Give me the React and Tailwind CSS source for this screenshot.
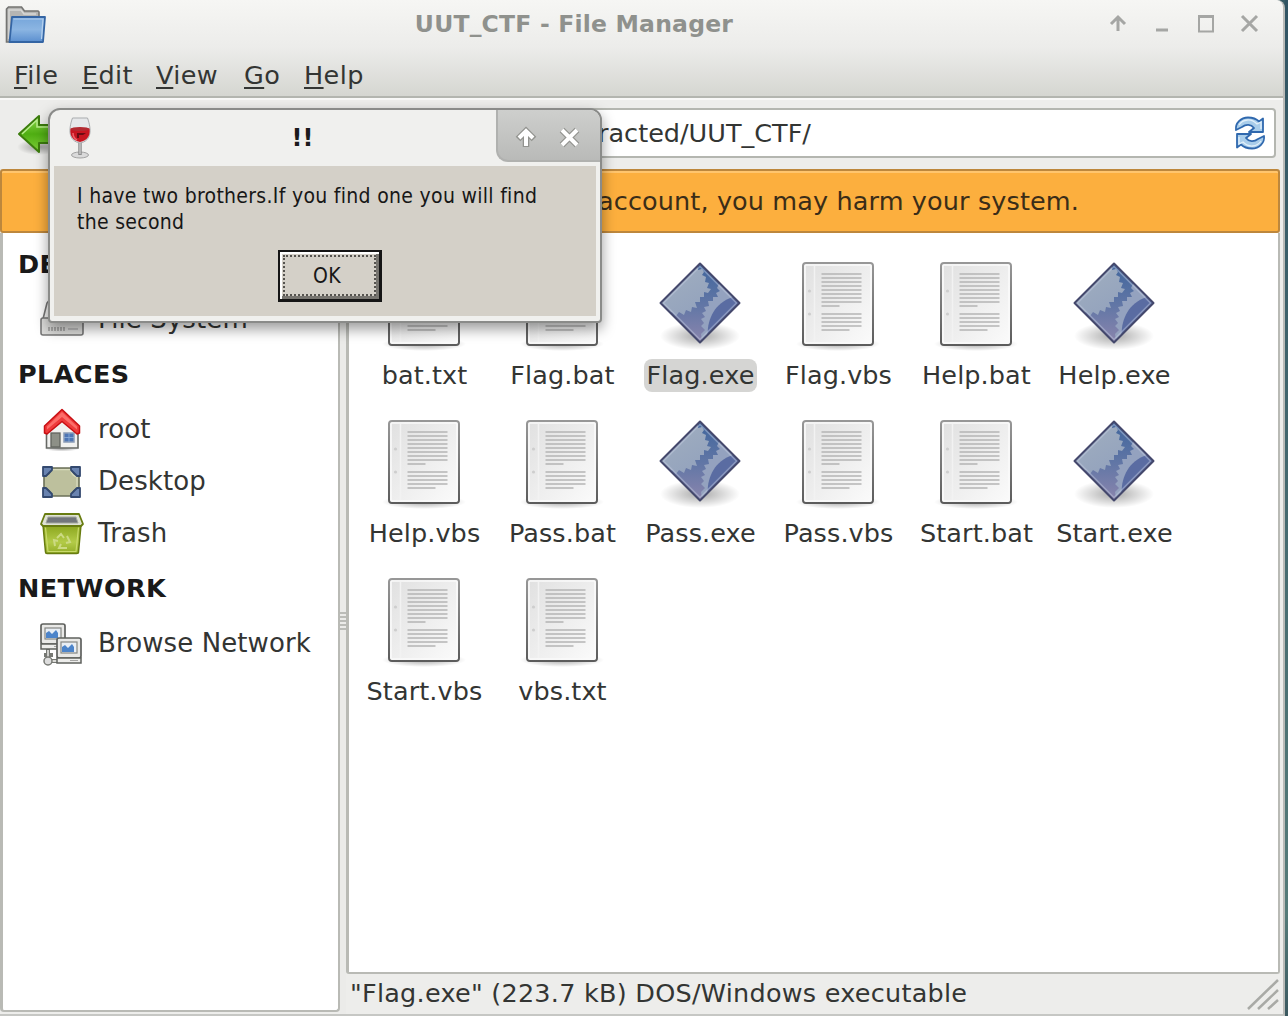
import React from "react";

const FILES = [
  ["bat.txt", "doc"], ["Flag.bat", "doc"], ["Flag.exe", "exe"], ["Flag.vbs", "doc"], ["Help.bat", "doc"], ["Help.exe", "exe"],
  ["Help.vbs", "doc"], ["Pass.bat", "doc"], ["Pass.exe", "exe"], ["Pass.vbs", "doc"], ["Start.bat", "doc"], ["Start.exe", "exe"],
  ["Start.vbs", "doc"], ["vbs.txt", "doc"],
];

function Defs() {
  return (
    <svg className="absolute h-0 w-0" aria-hidden="true">
      <defs>
        <linearGradient id="paper" x1="0" y1="0" x2="1" y2="1"><stop offset="0" stopColor="#e0e0e0" /><stop offset="1" stopColor="#fbfbfb" /></linearGradient>
        <linearGradient id="paperEdge" x1="0" y1="0" x2="0" y2="1"><stop offset="0" stopColor="#979797" /><stop offset="1" stopColor="#5c5c5c" /></linearGradient>
        <linearGradient id="exeBase" x1="0.5" y1="0" x2="0.5" y2="1"><stop offset="0" stopColor="#3f659c" /><stop offset="0.55" stopColor="#6377a6" /><stop offset="1" stopColor="#8a85ad" /></linearGradient>
        <linearGradient id="exeLight" x1="0" y1="0" x2="0.6" y2="1"><stop offset="0" stopColor="#a2b0c0" /><stop offset="1" stopColor="#94a3bd" /></linearGradient>
        <radialGradient id="shade"><stop offset="0" stopColor="#000" stopOpacity="0.34" /><stop offset="1" stopColor="#000" stopOpacity="0" /></radialGradient>
        <linearGradient id="folderBlue" x1="0" y1="0" x2="0" y2="1"><stop offset="0" stopColor="#75a5da" /><stop offset="0.5" stopColor="#8bb5e2" /><stop offset="1" stopColor="#5b8fcf" /></linearGradient>
        <linearGradient id="greenArrow" x1="0" y1="0" x2="0" y2="1"><stop offset="0" stopColor="#8cd74a" /><stop offset="0.5" stopColor="#4fae12" /><stop offset="1" stopColor="#7fd03a" /></linearGradient>
        <linearGradient id="bin" x1="0" y1="0" x2="0" y2="1"><stop offset="0" stopColor="#8aa51d" /><stop offset="0.6" stopColor="#b3cb48" /><stop offset="1" stopColor="#92ac27" /></linearGradient>
        <clipPath id="exeClip"><path d="M41 2 80 41 41 80 2 41Z" /></clipPath>
      </defs>
    </svg>
  );
}

function DocIcon() {
  const lines = [13, 17, 21, 25, 29, 33, 37, 41];
  const lower = [53, 57, 61, 65];
  return (
    <svg width="84" height="92" viewBox="0 0 84 92">
      <ellipse cx="42" cy="83" rx="42" ry="7" fill="url(#shade)" />
      <rect x="7" y="2" width="70" height="82" rx="3" fill="url(#paper)" stroke="url(#paperEdge)" strokeWidth="2" />
      <rect x="9" y="4" width="66" height="78" rx="1" fill="none" stroke="#fafafa" strokeWidth="1.6" />
      <path d="M18.5 5v76" stroke="#f2f2f2" strokeWidth="1.5" />
      <circle cx="13.5" cy="30" r="1.6" fill="#cecece" />
      <circle cx="13.5" cy="53" r="1.6" fill="#cecece" />
      {lines.map((y) => <path key={y} d={`M25.500 ${y}h40`} stroke="#b4b4b4" strokeWidth="1.7" />)}
      <path d="M25.500 45h18M25.500 69h28" stroke="#b4b4b4" strokeWidth="1.7" />
      {lower.map((y) => <path key={y} d={`M25.500 ${y}h40`} stroke="#b4b4b4" strokeWidth="1.7" />)}
    </svg>
  );
}

function ExeIcon() {
  return (
    <svg width="84" height="92" viewBox="0 0 84 92">
      <ellipse cx="42" cy="75" rx="40" ry="14" fill="url(#shade)" />
      <g transform="translate(1 1)">
        <path d="M41 2 80 41 41 80 2 41Z" fill="url(#exeBase)" />
        <g clipPath="url(#exeClip)">
          <path d="M0 0H38l1 8 4-1 2 3-2 3 4 2-1 5 4 1-2 5 4 1-3 4-4-1 0 5-4 0 0 5-5 0 2 6-5-1-1 5-5-2-2 5-5-3-3 4-4-4-4 3-3-4-8-1Z" fill="url(#exeLight)" />
          <path d="M86 24 60 22l-2 4 3 3-4 2 2 4-5 0 0 4-5 0 1 5-5 1 2 4-4 2 3 4-4 2 3 4-3 3 4 4-4 4 2 14h44Z" fill="#94a2bf" />
          <path d="M90 34C64 31 51 49 49 66L47 86H92Z" fill="#5a6ca2" />
        </g>
        <path d="M41 4.500 77.500 41 41 77.500 4.500 41Z" fill="none" stroke="#c3cce0" strokeWidth="1.500" opacity=".45" />
        <path d="M41 1.500 80.500 41 41 80.500 1.500 41Z" fill="none" stroke="#44486c" strokeWidth="2" strokeLinejoin="round" />
      </g>
    </svg>
  );
}

function FolderIcon() {
  return (
    <svg width="42" height="40" viewBox="0 0 42 40">
      <path d="M1.500 36V3l2-2h13l3 4H33l1 1v30Z" fill="#b5b5b3" stroke="#747472" strokeWidth="1.600" />
      <path d="M4 33V4h12l3 4h12" fill="none" stroke="#d8d8d6" strokeWidth="1.500" />
      <path d="M7 11h33l-2 25H4.500Z" fill="url(#folderBlue)" stroke="#3465a4" strokeWidth="1.800" strokeLinejoin="round" />
      <path d="M8.500 13h29.500l-1.500 20" fill="none" stroke="#b5d1ef" strokeWidth="1.200" />
    </svg>
  );
}

function HomeIcon() {
  return (
    <svg width="44" height="44" viewBox="0 0 44 44">
      <ellipse cx="22" cy="41" rx="17" ry="2.500" fill="url(#shade)" />
      <path d="M6.500 20 22 9l16 11v20h-31.500Z" fill="#f1f1ef" stroke="#666864" strokeWidth="1.600" />
      <rect x="11" y="25" width="9" height="14" fill="#8d9087" stroke="#62645e" strokeWidth="1.300" />
      <rect x="24" y="25" width="10" height="9" fill="#4e76b5" stroke="#8b9cb7" strokeWidth="1.500" />
      <path d="M29 25v9M24 29.500h10" stroke="#8eb0dc" strokeWidth=".8" />
      <path d="M22 1.500 4.500 18v7L7 26 22 13.500 37 26l2.500-1v-7Z" fill="#ef3b3b" stroke="#c80e12" strokeWidth="1.500" strokeLinejoin="round" />
      <path d="M22 4 7 18.500v3L22 9l15 12.500v-3Z" fill="#ff7b76" opacity=".8" />
    </svg>
  );
}

function DesktopIcon() {
  return (
    <svg width="44" height="44" viewBox="0 0 44 44">
      <path d="M11 8h21c0 5 3 7 7 8v12c-4 1-7 4-7 8H11c0-5-3-7-7-8V16c4-1 7-3 7-8Z" fill="#bdc09d" stroke="#6b7058" strokeWidth="1.600" />
      <path d="M12.500 9.700h18c1 5 3 6 6.500 7.500v10" fill="none" stroke="#d8dabd" strokeWidth="1.300" />
      <path d="M3 7h9v3l-6 6H3zM40 7h-9v3l6 6h3zM3 37h9v-3l-6-6H3zM40 37h-9v-3l6-6h3z" fill="#6983b0" stroke="#33496f" strokeWidth="1.800" strokeLinejoin="round" />
    </svg>
  );
}

function TrashIcon() {
  return (
    <svg width="44" height="44" viewBox="0 0 44 44">
      <path d="M3 13h38l-2.500 27q0 1.500-2 1.500H7Q5.500 41.500 5.500 40Z" fill="url(#bin)" stroke="#687c10" strokeWidth="1.500" />
      <path d="M5.500 15.500 8 39.500h28l2.500-24" fill="none" stroke="#c9da6b" strokeWidth="1.200" />
      <path d="M5 2h34l4 10-2 2H3l-2-2Z" fill="#dfe2d4" stroke="#687c10" strokeWidth="1.800" strokeLinejoin="round" />
      <path d="M8 5h28l2 6H6Z" fill="#72767b" stroke="#a4a89f" />
      <path d="M17 26l4-4 3 4M27 24l3 6-4 1M27 36h-8l2-4M15 34l-1-6 4 1" fill="none" stroke="#ccda83" strokeWidth="2" />
    </svg>
  );
}

function Computer() {
  return (
    <>
      <rect x="1" y="1" width="24" height="20" rx="2" fill="#e9e9e7" stroke="#5f615e" strokeWidth="1.700" />
      <rect x="5" y="5" width="16" height="11" fill="#e8eef5" stroke="#858783" strokeWidth="1.200" />
      <path d="M6 15V10l3-2 3 3 4-4 2 3v5Z" fill="#4c84ca" />
      <path d="M1 21h24v5H1z" fill="#ededeb" stroke="#5f615e" strokeWidth="1.500" />
      <path d="M14 23.500h8" stroke="#a5a5a3" />
    </>
  );
}

function NetworkIcon() {
  return (
    <svg width="44" height="44" viewBox="0 0 44 44">
      <path d="M8 27v12h10M4 33h9" fill="none" stroke="#777974" strokeWidth="4" />
      <path d="M8 28v11h10" fill="none" stroke="#dadad7" strokeWidth="1.800" />
      <circle cx="8" cy="39" r="4" fill="#ddd" stroke="#777974" strokeWidth="1.500" />
      <g transform="translate(0 1)"><Computer /></g>
      <g transform="translate(16 15)"><Computer /></g>
    </svg>
  );
}

function DriveIcon() {
  return (
    <svg width="44" height="44" viewBox="0 0 44 44">
      <path d="M7 5q1-2 3-2h24l3 2 5 20H2Z" fill="#f3f3f2" stroke="#777" strokeWidth="1.600" />
      <rect x="1" y="20" width="42" height="17" rx="2" fill="#dcdcda" stroke="#777" strokeWidth="1.600" />
      <path d="M9 29v4M12 29v4M15 29v4M18 29v4M21 29v4M24 29v4" stroke="#999" strokeWidth="1.500" />
      <path d="M28 31h10" stroke="#bbb" strokeWidth="2" />
    </svg>
  );
}

function WineIcon() {
  return (
    <svg width="24" height="44" viewBox="0 0 24 44">
      <ellipse cx="12" cy="39" rx="8.500" ry="3" fill="#dadada" stroke="#a2a2a2" />
      <path d="M12 26v13" stroke="#8e8e8e" strokeWidth="3.500" />
      <path d="M12 26v12" stroke="#dedede" />
      <path d="M4.500 2h15c4 11 4.500 23-7.500 25C0 25 .5 13 4.500 2Z" fill="#e6e8ea" stroke="#a9acae" />
      <path d="M2.500 12.500h19c1 7-2 12-9.500 13.500-7.500-1.500-10.500-6.500-9.500-13.500Z" fill="#c71520" />
      <ellipse cx="12" cy="13" rx="9.300" ry="2" fill="#b22a32" />
      <path d="M9 17h9l-3 2h-4v3H9Z" fill="#6b0b12" />
      <path d="M5 17c0 4 2 6 4 7" fill="none" stroke="#f06068" strokeWidth="1.500" />
    </svg>
  );
}

function ReloadIcon() {
  return (
    <svg width="32" height="34" viewBox="0 0 32 34">
      <g id="reloadHalf">
        <path d="M2 14C1 7 7 1.500 14 1.500c5 0 8 1 11 4l4-3V16H15l5-4c-3-4-8-4-12-1L2 14Z" fill="#a9cdea" stroke="#2f68ae" strokeWidth="1.800" strokeLinejoin="round" />
        <path d="M5 9c4-6 12-7 18-1l4-2v7" fill="none" stroke="#e2f0fa" strokeWidth="1.300" />
      </g>
      <use href="#reloadHalf" transform="rotate(180 16 17)" />
    </svg>
  );
}

function SideHeading({ children }) {
  return <h2 className="flex h-[58px] items-center pl-[15px] text-[25.500px] font-bold tracking-[0.4px] text-[#1a1a1a]">{children}</h2>;
}

function SideItem({ icon, children }) {
  return (
    <div className="flex h-[52px] items-center gap-[14px] pl-[37px] text-[26px] tracking-[0.1px]">
      {icon}
      <span className="-mt-[2px]">{children}</span>
    </div>
  );
}

const MENU = [["F", "ile", "w-[68px]"], ["E", "dit", "w-[74px]"], ["V", "iew", "w-[88px]"], ["G", "o", "w-[60px]"], ["H", "elp", "w-[70px]"]];

export default function App() {
  return (
    <div className="relative flex h-[1016px] w-[1288px] overflow-hidden bg-[#385b65] font-['DejaVu_Sans',sans-serif] leading-none whitespace-nowrap text-[#333533]">
      <Defs />
      <main className="flex w-[1285px] shrink-0 flex-col rounded-tr-lg border-r-2 border-b-2 border-r-[#babbb8] border-b-[#c6c7c4] bg-[#ededeb]">
        <header className="flex h-[98px] shrink-0 flex-col rounded-tr-lg border-b-2 border-[#b3b5af] bg-linear-to-b from-[#f6f6f4] via-[#ececea] via-50% to-[#d5d6d1]">
          <div className="flex h-[50px] shrink-0 items-center pt-[2px] pl-[5px]">
            <FolderIcon />
            <h1 className="-mt-[3px] w-[1052px] pl-[2px] text-center text-[23.500px] font-bold tracking-[0.2px] text-[#8f918d]">UUT_CTF - File Manager</h1>
            <svg className="-mt-[4px]" width="160" height="40" viewBox="0 0 160 40" fill="none" stroke="#a5a6a4" strokeWidth="3">
              <path d="M19 27V14M12 20l7-7 7 7" />
              <path d="M57 26h12" />
              <path d="M100 12.500h14v15h-14z" strokeWidth="2" /><path d="M99 12.500h16" />
              <path d="m143 12 15 15m0-15-15 15" />
            </svg>
          </div>
          <nav className="flex h-[46px] items-center pt-[6px] pl-[14px] text-[25.500px] tracking-[0.4px]">
            {MENU.map(([key, rest, width]) => (
              <span key={key} className={width}><span className="underline decoration-2 underline-offset-[3px]">{key}</span>{rest}</span>
            ))}
          </nav>
        </header>

        <section className="flex h-[71px] shrink-0 items-center border-t-2 border-[#f8f8f7] pl-[17px]">
          <svg width="50" height="44" viewBox="0 0 50 44">
            <ellipse cx="22" cy="34" rx="22" ry="8" fill="url(#shade)" />
            <path d="M2 21 22 3v9h25v18H22v9Z" fill="url(#greenArrow)" stroke="#3c7d0d" strokeWidth="2" strokeLinejoin="round" />
            <path d="M5 21 20 7v7h25" fill="none" stroke="#b8ec8b" strokeWidth="1.500" />
          </svg>
          <div className="mb-[3px] ml-[333px] flex h-[50px] w-[876px] items-center justify-between rounded-[4px] border-2 border-[#b4b6b0] bg-white pr-[8px] pl-[196px] text-[25.500px]">
            <span className="pt-[2px]">racted/UUT_CTF/</span>
            <ReloadIcon />
          </div>
        </section>

        <section className="flex h-[64px] w-[1280px] shrink-0 items-center rounded-[3px] border-2 border-[#bd873c] bg-[#fcaf3e] pt-[2px] pl-[596px] text-[25.500px] tracking-[0.12px] text-[#3a2d18] shadow-[inset_0_2px_0_#ffc56d]">
          account, you may harm your system.
        </section>

        <div className="flex h-[781px] shrink-0">
          <aside className="flex h-[779px] w-[340px] shrink-0 flex-col rounded-b-[4px] border-x-[3px] border-b-2 border-r-2 border-[#b9bab5] bg-white pt-[3px]">
            <SideHeading>DEVICES</SideHeading>
            <SideItem icon={<DriveIcon />}>File System</SideItem>
            <SideHeading>PLACES</SideHeading>
            <SideItem icon={<HomeIcon />}>root</SideItem>
            <SideItem icon={<DesktopIcon />}>Desktop</SideItem>
            <SideItem icon={<TrashIcon />}>Trash</SideItem>
            <SideHeading>NETWORK</SideHeading>
            <SideItem icon={<NetworkIcon />}>Browse Network</SideItem>
          </aside>

          <div className="flex w-[6px] shrink-0 flex-col gap-[2px] bg-[#ebebe9] pt-[379px]">
            <i className="h-[2px] bg-[#bbbcb8]" /><i className="h-[2px] bg-[#bbbcb8]" /><i className="h-[2px] bg-[#bbbcb8]" /><i className="h-[2px] bg-[#bbbcb8]" /><i className="h-[2px] bg-[#bbbcb8]" />
          </div>

          <div className="flex w-[934px] shrink-0 flex-col">
            <section className="h-[741px] shrink-0 rounded-b-[3px] border-r-2 border-b-2 border-l-3 border-[#b9bab5] bg-white pt-[28px] pl-[6px]">
              <div className="grid grid-cols-[repeat(6,138px)] auto-rows-[158px]">
                {FILES.map(([name, kind]) => (
                  <div key={name} className="flex flex-col items-center">
                    {kind === "doc" ? <DocIcon /> : <ExeIcon />}
                    <span className={name === "Flag.exe" ? "ml-px mt-[6px] flex h-[33px] w-[113px] items-center justify-center rounded-[8px] bg-[#d5d5d3] text-[25.500px] tracking-[0.15px]" : "ml-px mt-[6px] flex h-[33px] items-center text-[25.500px] tracking-[0.1px]"}>{name}</span>
                  </div>
                ))}
              </div>
            </section>
            <footer className="flex h-[40px] items-center justify-between pl-[4px] text-[25.500px] tracking-[0.25px]">
              <span>"Flag.exe" (223.7 kB) DOS/Windows executable</span>
              <svg width="34" height="34" viewBox="0 0 34 34" stroke="#a9aaa6" strokeWidth="2.500"><path d="m2 32 30-29M12 32l20-19M22 32l10-9" /></svg>
            </footer>
          </div>
        </div>
      </main>
      <div className="w-[3px] bg-linear-to-b from-[#315463] via-[#557b79] via-90% to-[#3b5960]" />

      <div role="dialog" className="absolute top-[108px] left-[48px] flex h-[215px] w-[554px] flex-col rounded-t-[12px] rounded-b-[4px] border-2 border-[#8a8b89] bg-[#f0f0ee] px-[4px] pb-[5px] shadow-[0_6px_14px_rgba(0,0,0,0.4)]">
        <div className="flex h-[56px] shrink-0 items-start">
          <div className="pt-[6px] pl-[14px]"><WineIcon /></div>
          <h2 className="w-[404px] pt-[16px] pl-[17px] text-center text-[24px] font-bold text-[#1b1b1b]">!!</h2>
          <div className="-mr-[4px] h-[52px] w-[104px] shrink-0 rounded-tr-[10px] rounded-bl-[12px] border-b-2 border-l-2 border-[#b0b1af] bg-linear-to-b from-[#cecfcd] to-[#b9bab8]">
            <svg width="102" height="50" viewBox="0 0 102 50" fill="none">
              <path d="M28 37V21M20 29l8-8 8 8M64 20l15 15m0-15L64 35" stroke="#92938f" strokeWidth="6.500" />
              <path d="M28 36V21M21 28l7-7 7 7M64 20l15 15m0-15L64 35" stroke="#fff" strokeWidth="4" />
            </svg>
          </div>
        </div>
        <div className="flex grow flex-col bg-[#d4d0c8] pt-[17px] pl-[23px] font-['DejaVu_Sans_Condensed','DejaVu_Sans',sans-serif] text-[21px] leading-[26px] tracking-[0.3px] text-[#171717]">
          <p>I have two brothers.If you find one you will find<br />the second</p>
          <button className="mt-[15px] ml-[201px] flex h-[52px] w-[104px] border-2 border-[#151515] border-r-[3px] border-b-[3px] p-[3px] shadow-[inset_2px_2px_0_#fff,inset_-3px_-3px_0_#777570]">
            <span className="flex h-full w-full items-center justify-center border-2 border-dotted border-[#55534f] pr-[5px]">OK</span>
          </button>
        </div>
      </div>
    </div>
  );
}
